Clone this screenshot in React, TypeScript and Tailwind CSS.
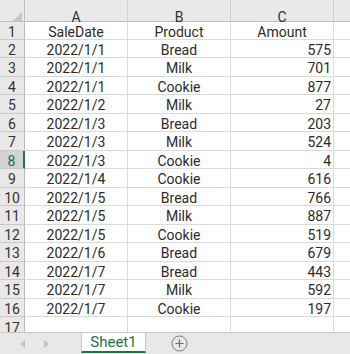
const rows = [
  ['2022/1/1', 'Bread', '575'],
  ['2022/1/1', 'Milk', '701'],
  ['2022/1/1', 'Cookie', '877'],
  ['2022/1/2', 'Milk', '27'],
  ['2022/1/3', 'Bread', '203'],
  ['2022/1/3', 'Milk', '524'],
  ['2022/1/3', 'Cookie', '4'],
  ['2022/1/4', 'Cookie', '616'],
  ['2022/1/5', 'Bread', '766'],
  ['2022/1/5', 'Milk', '887'],
  ['2022/1/5', 'Cookie', '519'],
  ['2022/1/6', 'Bread', '679'],
  ['2022/1/7', 'Bread', '443'],
  ['2022/1/7', 'Milk', '592'],
  ['2022/1/7', 'Cookie', '197'],
]

const gridCols = 'grid grid-cols-[25px_103px_103px_103px_16px]'

function Row({ n, cells, tall, selected }: { n: number; cells: string[]; tall: boolean; selected?: boolean }) {
  return (
    <div className={`${gridCols} ${tall ? 'h-[19px]' : 'h-[18px]'}`}>
      <div
        className={`flex items-center justify-center pt-[2px] border-b border-[#c9c9c9] ${
          selected ? 'bg-[#d3d3d3] text-[#1e6b47] border-r-2 border-r-[#217346]' : 'bg-[#e9e9e9] text-[#333] border-r border-r-[#bdbdbd]'
        }`}
      >
        {n}
      </div>
      <div className="flex items-center justify-center border-b border-r border-[#dadada] pt-[2px]">{cells[0]}</div>
      <div className="flex items-center justify-center border-b border-r border-[#dadada] pt-[2px]">{cells[1]}</div>
      <div
        className={`flex items-center border-b border-r border-[#dadada] pt-[2px] ${
          n === 1 ? 'justify-center' : 'justify-end pr-[2px]'
        }`}
      >
        {cells[2]}
      </div>
      <div className="border-b border-[#dadada]" />
    </div>
  )
}

export default function App() {
  return (
    <div
      className="w-[350px] h-[354px] overflow-hidden flex flex-col bg-white text-[14px] leading-none text-[#2b2b2b]"
      style={{ fontFamily: 'Roboto, "Liberation Sans", sans-serif' }}
    >
      {/* Column headers */}
      <div className={`${gridCols} h-[22px] bg-[#e9e9e9] border-b border-[#bdbdbd] shrink-0`}>
        <div className="flex items-end justify-end pr-[2px] pb-[1px] border-r border-[#bdbdbd]">
          <svg width="11" height="11" viewBox="0 0 11 11">
            <polygon points="0,11 11,0 11,11" fill="#c4c4c4" />
          </svg>
        </div>
        {['A', 'B', 'C'].map((c) => (
          <div key={c} className="flex items-center justify-center pt-[10px] text-[#333] border-r border-[#cfcfcf]">
            {c}
          </div>
        ))}
        <div />
      </div>

      <Row n={1} cells={['SaleDate', 'Product', 'Amount']} tall={false} />
      {rows.map((r, i) => (
        <Row key={i} n={i + 2} cells={r} tall={i % 2 === 1} selected={i + 2 === 8} />
      ))}

      {/* Row 17, cut off by the sheet tabs */}
      <div className={`${gridCols} flex-1 overflow-hidden`}>
        <div className="flex justify-center pt-[4px] bg-[#e9e9e9] text-[#333] border-r border-[#bdbdbd]">17</div>
        <div className="border-r border-[#dadada]" />
        <div className="border-r border-[#dadada]" />
        <div className="border-r border-[#dadada]" />
        <div />
      </div>

      {/* Sheet tabs */}
      <div className="h-[22px] shrink-0 flex items-start bg-[#e8e8e8] border-t border-[#c6c6c6]">
        <div className="w-[81px] h-[21px] flex items-center gap-[17px] pl-[20px]">
          <svg width="6" height="8" viewBox="0 0 6 8">
            <polygon points="5,0 0,4 5,8" fill="#c2c2c2" />
          </svg>
          <svg width="6" height="8" viewBox="0 0 6 8">
            <polygon points="1,0 6,4 1,8" fill="#c2c2c2" />
          </svg>
        </div>
        <div className="w-[65px] h-[20px] flex items-center justify-center bg-white border-x border-[#c6c6c6] border-b-2 border-b-[#217346] text-[#217346] text-[15px]">
          Sheet1
        </div>
        <div className="h-[21px] flex items-center pl-[25px]">
          <svg width="17" height="17" viewBox="0 0 17 17">
            <circle cx="8.5" cy="8.5" r="7.5" fill="none" stroke="#7a7a7a" strokeWidth="1" />
            <path d="M8.5 4.5v8M4.5 8.5h8" stroke="#6a6a6a" strokeWidth="1.2" />
          </svg>
        </div>
      </div>
    </div>
  )
}
